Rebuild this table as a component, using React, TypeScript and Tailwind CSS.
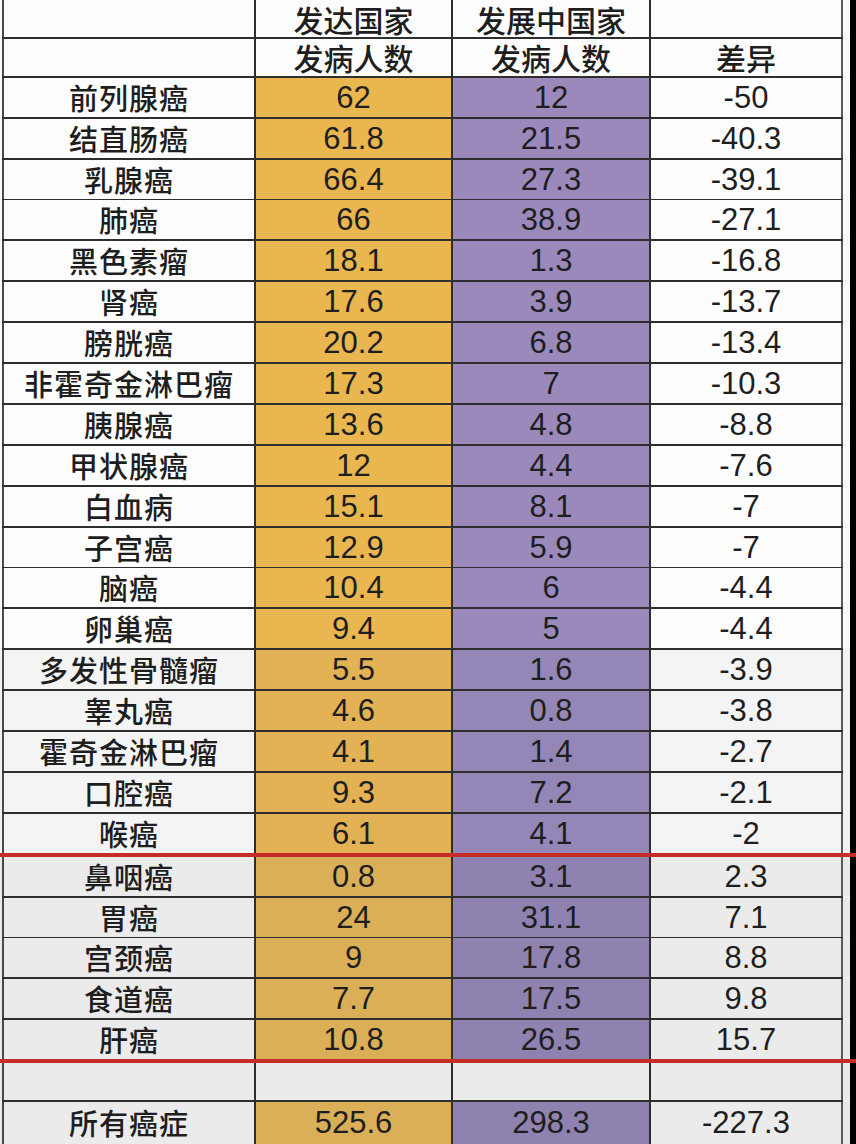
import React from 'react';

type Row = { name: string; dev: string; ing: string; diff: string };

const rows: Row[] = [
  { name: '前列腺癌', dev: '62', ing: '12', diff: '-50' },
  { name: '结直肠癌', dev: '61.8', ing: '21.5', diff: '-40.3' },
  { name: '乳腺癌', dev: '66.4', ing: '27.3', diff: '-39.1' },
  { name: '肺癌', dev: '66', ing: '38.9', diff: '-27.1' },
  { name: '黑色素瘤', dev: '18.1', ing: '1.3', diff: '-16.8' },
  { name: '肾癌', dev: '17.6', ing: '3.9', diff: '-13.7' },
  { name: '膀胱癌', dev: '20.2', ing: '6.8', diff: '-13.4' },
  { name: '非霍奇金淋巴瘤', dev: '17.3', ing: '7', diff: '-10.3' },
  { name: '胰腺癌', dev: '13.6', ing: '4.8', diff: '-8.8' },
  { name: '甲状腺癌', dev: '12', ing: '4.4', diff: '-7.6' },
  { name: '白血病', dev: '15.1', ing: '8.1', diff: '-7' },
  { name: '子宫癌', dev: '12.9', ing: '5.9', diff: '-7' },
  { name: '脑癌', dev: '10.4', ing: '6', diff: '-4.4' },
  { name: '卵巢癌', dev: '9.4', ing: '5', diff: '-4.4' },
  { name: '多发性骨髓瘤', dev: '5.5', ing: '1.6', diff: '-3.9' },
  { name: '睾丸癌', dev: '4.6', ing: '0.8', diff: '-3.8' },
  { name: '霍奇金淋巴瘤', dev: '4.1', ing: '1.4', diff: '-2.7' },
  { name: '口腔癌', dev: '9.3', ing: '7.2', diff: '-2.1' },
  { name: '喉癌', dev: '6.1', ing: '4.1', diff: '-2' },
  { name: '鼻咽癌', dev: '0.8', ing: '3.1', diff: '2.3' },
  { name: '胃癌', dev: '24', ing: '31.1', diff: '7.1' },
  { name: '宫颈癌', dev: '9', ing: '17.8', diff: '8.8' },
  { name: '食道癌', dev: '7.7', ing: '17.5', diff: '9.8' },
  { name: '肝癌', dev: '10.8', ing: '26.5', diff: '15.7' },
];

// photo of a printed sheet: lower rows get a bit darker
const tones = [
  { white: 'bg-[#fdfdfd]', gold: 'bg-[#e9b650]', violet: 'bg-[#9b89bc]', edge: 'bg-[#fafafa]' },
  { white: 'bg-[#f4f4f4]', gold: 'bg-[#e2b254]', violet: 'bg-[#9486b6]', edge: 'bg-[#f2f2f2]' },
  { white: 'bg-[#ebebeb]', gold: 'bg-[#dbae58]', violet: 'bg-[#8f82b0]', edge: 'bg-[#e9e9e9]' },
];

const toneOf = (i: number) => (i < 14 ? tones[0] : i < 19 ? tones[1] : tones[2]);

const cjk = "font-['Noto_Sans_CJK_SC','Noto_Sans',sans-serif]";
const num = "font-['Liberation_Sans',Arial,sans-serif]";

function Line({ red }: { red?: boolean }) {
  if (red) return <div className="h-[4px] w-full bg-[#c42d28]" />;
  return (
    <div className="flex h-[2px] w-full">
      <div className="w-[2px] bg-[#f3f3f3]" />
      <div className="w-[841px] bg-[#2e2e2e]" />
      <div className="w-[7px] bg-[#f3f3f3]" />
      <div className="w-[6px] bg-black" />
    </div>
  );
}

function TableRow({
  h,
  tone,
  cells,
  head,
  blank,
}: {
  h: string;
  tone: (typeof tones)[number];
  cells: [React.ReactNode, React.ReactNode, React.ReactNode, React.ReactNode];
  head?: boolean;
  blank?: boolean;
}) {
  const txt = head ? `${cjk} font-medium text-[30px]` : `${num} text-[31px]`;
  const plain = head || blank;
  return (
    <div className={`flex ${h} w-full shrink-0 text-[#1e1e1e] leading-none`}>
      <div className={`w-[2px] ${tone.edge}`} />
      <div className="w-[2px] bg-[#4a4a4a]" />
      <div className={`w-[250px] ${tone.white} flex items-center justify-center ${cjk} font-medium text-[29px] tracking-[1px]`}>
        {cells[0]}
      </div>
      <div className="w-[2px] bg-[#2e2e2e]" />
      <div className={`w-[195px] ${plain ? tone.white : tone.gold} flex items-center justify-center ${txt}`}>
        {cells[1]}
      </div>
      <div className="w-[2px] bg-[#2e2e2e]" />
      <div className={`w-[196px] ${plain ? tone.white : tone.violet} flex items-center justify-center ${txt}`}>
        {cells[2]}
      </div>
      <div className="w-[2px] bg-[#2e2e2e]" />
      <div className={`w-[190px] ${tone.white} flex items-center justify-center ${txt}`}>{cells[3]}</div>
      <div className="w-[2px] bg-[#5a5a5a]" />
      <div className={`w-[7px] ${tone.edge}`} />
      <div className="w-[6px] bg-black" />
    </div>
  );
}

export default function App() {
  return (
    <div className="w-[856px] h-[1144px] overflow-hidden bg-[#f3f3f3] flex flex-col">
      <TableRow h="h-[37px]" tone={tones[0]} head cells={['', '发达国家', '发展中国家', '']} />
      <Line />
      <TableRow h="h-[37px]" tone={tones[0]} head cells={['', '发病人数', '发病人数', '差异']} />
      <Line />
      {rows.map((r, i) => (
        <React.Fragment key={r.name}>
          <TableRow h="h-[39px]" tone={toneOf(i)} cells={[r.name, r.dev, r.ing, r.diff]} />
          {i === 18 || i === 23 ? <Line red /> : i < 23 ? <Line /> : null}
        </React.Fragment>
      ))}
      <TableRow h="h-[37px]" tone={tones[2]} blank cells={['', '', '', '']} />
      <Line />
      <TableRow h="h-[42px]" tone={tones[2]} cells={['所有癌症', '525.6', '298.3', '-227.3']} />
    </div>
  );
}
